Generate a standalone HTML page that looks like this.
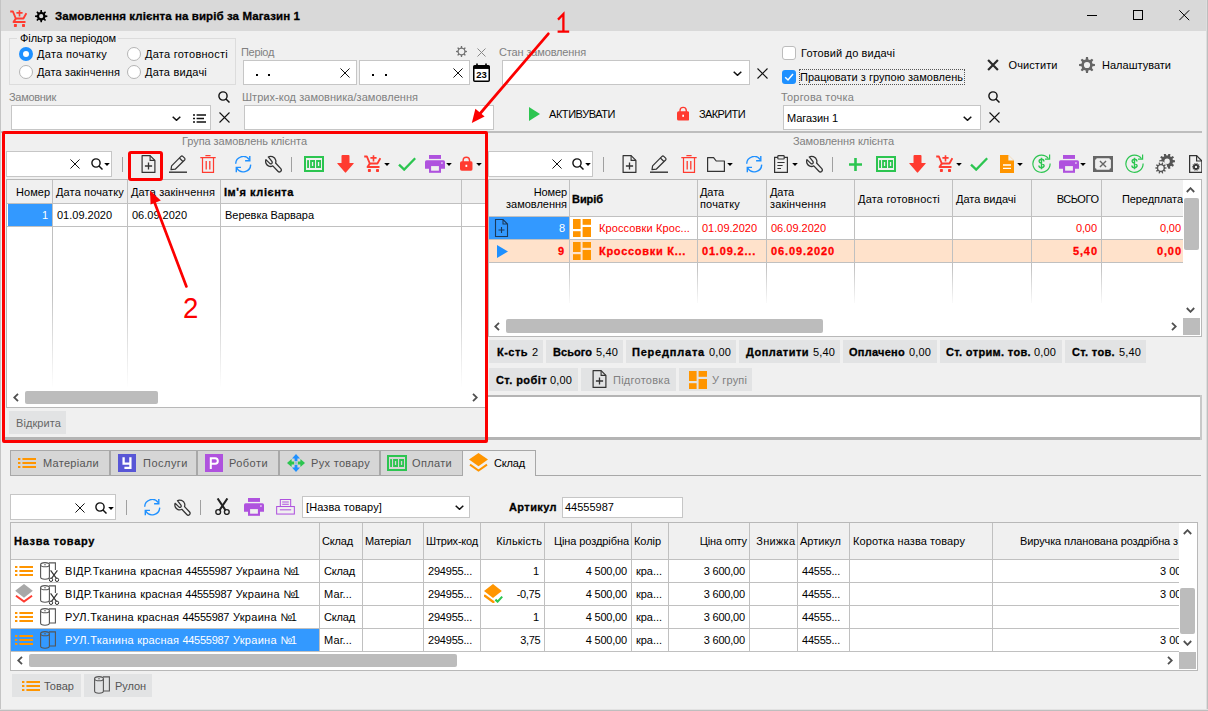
<!DOCTYPE html>
<html><head><meta charset="utf-8"><title>UI</title><style>
html,body{margin:0;padding:0;}
body{width:1208px;height:711px;overflow:hidden;background:#f0f0f0;position:relative;font-family:"Liberation Sans",sans-serif;font-size:11px;}
.a{position:absolute;display:block;}
.t{white-space:nowrap;overflow:visible;}
</style></head><body>
<svg width="0" height="0" style="position:absolute"><defs><symbol id="newdoc" viewBox="0 0 14 18"><path d="M0.6 0.6H8.6L13.4 5.4V17.4H0.6Z" fill="none" stroke="#333" stroke-width="1.2" stroke-linejoin="round"/><path d="M8.6 0.6V5.4H13.4" fill="none" stroke="#333" stroke-width="1.1"/><path d="M7 7.6V14.4M3.4 11H10.6" stroke="#333" stroke-width="1.3" fill="none"/></symbol><symbol id="pencil" viewBox="0 0 18 18"><path d="M2 14.6L2.6 10.8L12 1.4Q12.9 0.6 13.8 1.4L15.6 3.2Q16.4 4.1 15.6 5L6.2 14.2Z" fill="none" stroke="#333" stroke-width="1.2" stroke-linejoin="round"/><path d="M10.4 3L13.9 6.5" stroke="#333" stroke-width="1.2"/><path d="M0 17.2H18" stroke="#333" stroke-width="1.4"/></symbol><symbol id="trash" viewBox="0 0 16 18"><path d="M0.3 2.6H15.7M5.4 0.6H10.6" stroke="#ff3b30" stroke-width="1.2" fill="none"/><path d="M2.5 2.6V17.3H13.5V2.6" fill="none" stroke="#ff3b30" stroke-width="1.2"/><path d="M6.2 6V14.4M9.8 6V14.4" stroke="#ff3b30" stroke-width="1.3"/></symbol><symbol id="refresh" viewBox="0 0 17 17"><path d="M0.7 7.8A7.5 7.5 0 0 1 14.3 3.6" fill="none" stroke="#1e90ff" stroke-width="1.4"/><path d="M14.8 0V4.7H10.1" fill="none" stroke="#1e90ff" stroke-width="1.4"/><path d="M15.7 8.6A7.5 7.5 0 0 1 1.8 12.2" fill="none" stroke="#1e90ff" stroke-width="1.4"/><path d="M1.3 16.2V11.4H6" fill="none" stroke="#1e90ff" stroke-width="1.4"/></symbol><symbol id="wrench" viewBox="0 0 17 17.5"><path d="M3.3 1.7C5.5 0.2 9.8 1.5 10.7 4.8C11 6 10.9 7 10.6 7.8L15.8 13.4Q17 14.9 15.6 16.2Q14.2 17.4 12.9 16L7.8 10.6C6.5 11.3 5 11.4 3.8 10.9C1.5 10 0 7.2 0.9 4.4L5 8.4Q6 9 6.8 8.2Q7.6 7.2 6.9 6.2Z" fill="none" stroke="#333" stroke-width="1.3" stroke-linejoin="round"/></symbol><symbol id="money" viewBox="0 0 20 16"><rect x="1" y="1" width="18" height="14" fill="none" stroke="#2cc550" stroke-width="2"/><rect x="3.1" y="4.1" width="1.9" height="7.9" rx="0.5" fill="#2cc550"/><path d="M6.1 4.1H11V12H6.1Z M7.9 6.1V10H9.2V6.1Z M12.1 4.1H17V12H12.1Z M13.9 6.1V10H15.2V6.1Z" fill="#2cc550" fill-rule="evenodd"/></symbol><symbol id="down" viewBox="0 0 17 18"><path d="M4.5 1Q4.5 0 5.5 0H11.5Q12.5 0 12.5 1V8H16.3Q17.2 8 16.5 8.8L9.1 17.3Q8.5 18 7.9 17.3L0.5 8.8Q-0.2 8 0.7 8H4.5Z" fill="#ff3b30"/></symbol><symbol id="cart" viewBox="0 0 17 18"><path d="M0.2 1.5H2.9L5.8 8.5H13.4L16.4 3.2" fill="none" stroke="#ff3b30" stroke-width="1.9" stroke-linejoin="round"/><path d="M5.8 8.6L3.5 12H15.5" fill="none" stroke="#ff3b30" stroke-width="1.9" stroke-linejoin="round"/><rect x="3.9" y="14" width="3" height="3" rx="0.7" fill="#ff3b30"/><rect x="12" y="14" width="3" height="3" rx="0.7" fill="#ff3b30"/><path d="M9.5 0.2V6.4M6.4 2.9H12.6" stroke="#ff3b30" stroke-width="1.6"/></symbol><symbol id="check" viewBox="0 0 18 14"><path d="M1 7.6L6.2 12.6L17.2 1.2" fill="none" stroke="#2cc550" stroke-width="2.3"/></symbol><symbol id="printer" viewBox="0 0 20 18"><rect x="4" y="0" width="12" height="3.9" fill="#af52de"/><path d="M1.6 5.2H18.4Q20 5.2 20 6.8V13.8H0V6.8Q0 5.2 1.6 5.2Z" fill="#af52de"/><rect x="4" y="10" width="12" height="7.8" fill="#af52de"/><rect x="6.1" y="11.1" width="7.8" height="4.6" fill="#f0f0f0"/><rect x="16" y="7.1" width="1.8" height="1.8" rx="0.4" fill="#dbb6ef"/></symbol><symbol id="printer2" viewBox="0 0 20 17"><path d="M4.5 8V0.6H15.5V8" fill="none" stroke="#af52de" stroke-width="1.1"/><rect x="0.6" y="8" width="18.8" height="8" fill="none" stroke="#af52de" stroke-width="1.1"/><path d="M6.5 3.2H13.5M6.5 5.6H13.5" stroke="#af52de" stroke-width="1.1"/><path d="M4 11.5H16" stroke="#af52de" stroke-width="1.1"/></symbol><symbol id="lock" viewBox="0 0 13 15"><path d="M3.2 6V4.3A3.3 3.3 0 0 1 9.8 4.3V6" fill="none" stroke="#ff3b30" stroke-width="1.5"/><rect x="0" y="5.2" width="13" height="9.8" rx="1.8" fill="#ff3b30"/><rect x="5.6" y="8.8" width="1.8" height="2.2" fill="#fff"/></symbol><symbol id="dd" viewBox="0 0 6 3.2"><path d="M0 0H6L3 3.2Z" fill="#000"/></symbol><symbol id="folder" viewBox="0 0 18 15"><path d="M0.6 14.4V0.6H6.6L9.2 4H17.4V14.4Z" fill="none" stroke="#333" stroke-width="1.2" stroke-linejoin="round"/></symbol><symbol id="clip" viewBox="0 0 14 18"><path d="M3.8 2.4H0.6V17.4H13.4V2.4H10.2" fill="none" stroke="#333" stroke-width="1.2"/><rect x="3.8" y="0.6" width="6.4" height="3.4" rx="0.8" fill="none" stroke="#333" stroke-width="1.2"/><path d="M3.4 7.5H10.6M3.4 10.5H8.6M3.4 13.5H7" stroke="#333" stroke-width="1.2"/></symbol><symbol id="plus" viewBox="0 0 13 13"><path d="M6.5 0V13M0 6.5H13" stroke="#2cc550" stroke-width="2.6"/></symbol><symbol id="odoc" viewBox="0 0 14 18"><path d="M0 0H8.4L14 5.6V18H0Z" fill="#ff9500"/><path d="M3 10H11M3 13.4H11" stroke="#fff" stroke-width="1.3"/><path d="M8.4 0V5.6H14Z" fill="#f0f0f0"/></symbol><symbol id="dollar" viewBox="0 0 19 19"><path d="M16.4 4.6A8.6 8.6 0 1 0 18.1 9.4" fill="none" stroke="#2cc550" stroke-width="1.2"/><path d="M17.6 0.6V5.2H13" fill="none" stroke="#2cc550" stroke-width="1.2"/><path d="M11.9 7.4C11.9 5.9 10.8 5.3 9.5 5.3C8 5.3 7.1 6.1 7.1 7.2C7.1 8.5 8.2 8.9 9.5 9.3C10.9 9.7 12.1 10.2 12.1 11.6C12.1 12.9 11 13.7 9.5 13.7C8 13.7 6.9 12.9 6.9 11.5M9.5 3.8V15.2" fill="none" stroke="#2cc550" stroke-width="1.4"/></symbol><symbol id="xbox" viewBox="0 0 19 15"><path d="M0 0H19V15H0Z M2 3.4Q3.4 3.4 3.4 2H15.6Q15.6 3.4 17 3.4V11.6Q15.6 11.6 15.6 13H3.4Q3.4 11.6 2 11.6Z" fill="#666" fill-rule="evenodd"/><path d="M6.6 4.6L12.4 10.4M12.4 4.6L6.6 10.4" stroke="#666" stroke-width="1.3"/></symbol><symbol id="gearblk" viewBox="0 0 13 13"><path d="M12.36 5.47L12.36 6.93L10.40 7.14L9.83 8.50L11.07 10.04L10.04 11.07L8.50 9.83L7.14 10.40L6.93 12.36L5.47 12.36L5.26 10.40L3.90 9.83L2.36 11.07L1.33 10.04L2.57 8.50L2.00 7.14L0.04 6.93L0.04 5.47L2.00 5.26L2.57 3.90L1.33 2.36L2.36 1.33L3.90 2.57L5.26 2.00L5.47 0.04L6.93 0.04L7.14 2.00L8.50 2.57L10.04 1.33L11.07 2.36L9.83 3.90L10.40 5.26Z M4.10 6.20a2.1 2.1 0 1 0 4.2 0a2.1 2.1 0 1 0 -4.2 0Z" fill="#000" fill-rule="evenodd"/></symbol><symbol id="geargray" viewBox="0 0 17 17"><path d="M16.93 7.43L16.93 9.57L14.43 9.92L13.70 11.69L15.22 13.71L13.71 15.22L11.69 13.70L9.92 14.43L9.57 16.93L7.43 16.93L7.08 14.43L5.31 13.70L3.29 15.22L1.78 13.71L3.30 11.69L2.57 9.92L0.07 9.57L0.07 7.43L2.57 7.08L3.30 5.31L1.78 3.29L3.29 1.78L5.31 3.30L7.08 2.57L7.43 0.07L9.57 0.07L9.92 2.57L11.69 3.30L13.71 1.78L15.22 3.29L13.70 5.31L14.43 7.08Z M5.20 8.50a3.3 3.3 0 1 0 6.6 0a3.3 3.3 0 1 0 -6.6 0Z" fill="#666" fill-rule="evenodd"/></symbol><symbol id="gearout" viewBox="0 0 11 11"><path d="M10.97 4.94L10.97 6.06L9.29 6.41L8.83 7.54L9.77 8.97L8.97 9.77L7.54 8.83L6.41 9.29L6.06 10.97L4.94 10.97L4.59 9.29L3.46 8.83L2.03 9.77L1.23 8.97L2.17 7.54L1.71 6.41L0.03 6.06L0.03 4.94L1.71 4.59L2.17 3.46L1.23 2.03L2.03 1.23L3.46 2.17L4.59 1.71L4.94 0.03L6.06 0.03L6.41 1.71L7.54 2.17L8.97 1.23L9.77 2.03L8.83 3.46L9.29 4.59Z M2.70 5.50a2.8 2.8 0 1 0 5.6 0a2.8 2.8 0 1 0 -5.6 0Z" fill="#707070" fill-rule="evenodd"/></symbol><symbol id="gears" viewBox="0 0 21 20.5"><path d="M19.94 6.31L19.94 8.29L17.88 8.48L17.47 9.74L19.02 11.11L17.86 12.71L16.08 11.65L15.01 12.43L15.46 14.45L13.58 15.06L12.77 13.16L11.43 13.16L10.62 15.06L8.74 14.45L9.19 12.43L8.12 11.65L6.34 12.71L5.18 11.11L6.73 9.74L6.32 8.48L4.26 8.29L4.26 6.31L6.32 6.12L6.73 4.86L5.18 3.49L6.34 1.89L8.12 2.95L9.19 2.17L8.74 0.15L10.62 -0.46L11.43 1.44L12.77 1.44L13.58 -0.46L15.46 0.15L15.01 2.17L16.08 2.95L17.86 1.89L19.02 3.49L17.47 4.86L17.88 6.12Z M9.40 7.30a2.7 2.7 0 1 0 5.4 0a2.7 2.7 0 1 0 -5.4 0Z" fill="#555" fill-rule="evenodd"/><circle cx="5.9" cy="14" r="6.7" fill="#f0f0f0"/><path d="M11.57 13.39L11.57 14.61L9.93 14.77L9.61 15.75L10.84 16.84L10.13 17.82L8.71 16.99L7.88 17.59L8.23 19.20L7.07 19.58L6.41 18.07L5.39 18.07L4.73 19.58L3.57 19.20L3.92 17.59L3.09 16.99L1.67 17.82L0.96 16.84L2.19 15.75L1.87 14.77L0.23 14.61L0.23 13.39L1.87 13.23L2.19 12.25L0.96 11.16L1.67 10.18L3.09 11.01L3.92 10.41L3.57 8.80L4.73 8.42L5.39 9.93L6.41 9.93L7.07 8.42L8.23 8.80L7.88 10.41L8.71 11.01L10.13 10.18L10.84 11.16L9.61 12.25L9.93 13.23Z M3.20 14.00a2.7 2.7 0 1 0 5.4 0a2.7 2.7 0 1 0 -5.4 0Z" fill="#555" fill-rule="evenodd"/></symbol><symbol id="docgear" viewBox="0 0 14 18"><path d="M0.6 0.6H7.6L12.9 6V17.4H0.6Z" fill="none" stroke="#333" stroke-width="1.3" stroke-linejoin="round"/><path d="M7.6 0.6V6H12.9" fill="none" stroke="#333" stroke-width="1.2"/><path d="M10.97 11.45L10.97 12.35L9.85 12.44L9.62 13.13L10.48 13.87L9.95 14.60L8.99 14.01L8.40 14.44L8.66 15.54L7.80 15.82L7.36 14.78L6.64 14.78L6.20 15.82L5.34 15.54L5.60 14.44L5.01 14.01L4.05 14.60L3.52 13.87L4.38 13.13L4.15 12.44L3.03 12.35L3.03 11.45L4.15 11.36L4.38 10.67L3.52 9.93L4.05 9.20L5.01 9.79L5.60 9.36L5.34 8.26L6.20 7.98L6.64 9.02L7.36 9.02L7.80 7.98L8.66 8.26L8.40 9.36L8.99 9.79L9.95 9.20L10.48 9.93L9.62 10.67L9.85 11.36Z M5.80 11.90a1.2 1.2 0 1 0 2.4 0a1.2 1.2 0 1 0 -2.4 0Z" fill="#333" fill-rule="evenodd"/></symbol><symbol id="search" viewBox="0 0 12 12"><circle cx="5" cy="5" r="4.1" fill="none" stroke="#111" stroke-width="1.4"/><path d="M8 8L11.5 11.5" stroke="#111" stroke-width="1.5"/></symbol><symbol id="x" viewBox="0 0 11 11"><path d="M0.5 0.5L10.5 10.5M10.5 0.5L0.5 10.5" stroke="#111" stroke-width="1.1"/></symbol><symbol id="xgray" viewBox="0 0 9 9"><path d="M0.5 0.5L8.5 8.5M8.5 0.5L0.5 8.5" stroke="#888" stroke-width="1"/></symbol><symbol id="xbold" viewBox="0 0 11 11"><path d="M1 1L10 10M10 1L1 10" stroke="#2a2a2a" stroke-width="2"/></symbol><symbol id="chev" viewBox="0 0 9 5"><path d="M0.7 0.7L4.5 4.3L8.3 0.7" fill="none" stroke="#111" stroke-width="1.5"/></symbol><symbol id="list" viewBox="0 0 13 9"><path d="M0 1H2M0 4.5H2M0 8H2" stroke="#111" stroke-width="1.6"/><path d="M3.6 1H13M3.6 4.5H11M3.6 8H13" stroke="#111" stroke-width="1.6"/></symbol><symbol id="olist" viewBox="0 0 18 10"><path d="M0 1H2.4M0 5H2.4M0 9H2.4" stroke="#ff9500" stroke-width="1.8"/><path d="M4.4 1H18M4.4 5H18M4.4 9H18" stroke="#ff9500" stroke-width="1.8"/></symbol><symbol id="ogrid" viewBox="0 0 18 18"><rect x="0" y="0" width="7.6" height="10" fill="#ff9500"/><rect x="9.6" y="0" width="8.4" height="5.8" fill="#ff9500"/><rect x="0" y="12.2" width="7.6" height="5.8" fill="#ff9500"/><rect x="9.6" y="8" width="8.4" height="10" fill="#ff9500"/></symbol><symbol id="play" viewBox="0 0 11 14"><path d="M0 0L11 7L0 14Z" fill="#2cc550"/></symbol><symbol id="playblue" viewBox="0 0 11 13"><path d="M0 0L11 6.5L0 13Z" fill="#1e90ff"/></symbol><symbol id="cal" viewBox="0 0 17 19"><rect x="0.75" y="2.75" width="15.5" height="15.5" rx="1" fill="#fff" stroke="#000" stroke-width="1.5"/><rect x="0.75" y="2.75" width="15.5" height="3.2" fill="#000"/><path d="M4 0.5V3M13 0.5V3" stroke="#000" stroke-width="1.6"/><text x="8.6" y="15.2" font-family="Liberation Sans" font-size="9.5" font-weight="bold" text-anchor="middle" fill="#000">23</text></symbol><symbol id="scis" viewBox="0 0 15 17"><path d="M2.6 0.4L10.6 12.4M12.4 0.4L4.4 12.4" stroke="#222" stroke-width="2"/><circle cx="3.2" cy="14" r="2.4" fill="none" stroke="#222" stroke-width="1.4"/><circle cx="11.8" cy="14" r="2.4" fill="none" stroke="#222" stroke-width="1.4"/></symbol><symbol id="move" viewBox="0 0 18 18"><path d="M9 0L13 4.6H5Z" fill="#1e90ff"/><path d="M9 18L13 13.4H5Z" fill="#1e90ff"/><path d="M0 9L4.6 5V13Z" fill="#2cc550"/><path d="M18 9L13.4 5V13Z" fill="#2cc550"/><path d="M9 4V7.2M9 10.8V14" stroke="#1e90ff" stroke-width="2.8"/><path d="M4 9H7.2M10.8 9H14" stroke="#2cc550" stroke-width="2.8"/><rect x="8.1" y="8.1" width="1.8" height="1.8" fill="#9db8d8"/></symbol><symbol id="layers" viewBox="0 0 19 19"><path d="M9.5 0L19 6.6L9.5 13.2L0 6.6Z" fill="#ff9500"/><path d="M1 11.6L9.5 17.6L18 11.6" fill="none" stroke="#ff9500" stroke-width="1.9"/></symbol><symbol id="layersgray" viewBox="0 0 18 19.4"><path d="M9 0L18 7L9 14L0 7Z" fill="#a8a8a8"/><path d="M0.8 12L9 18L17.2 12" fill="none" stroke="#ff3b30" stroke-width="2"/></symbol><symbol id="layerschk" viewBox="0 0 19 19"><path d="M9 0L17.8 7L9 14L0 7Z" fill="#ff9500"/><path d="M0.8 11.8L9.4 18" fill="none" stroke="#ff9500" stroke-width="2.4" stroke-linecap="round"/><path d="M11.4 15.6L13.6 17.6L18.2 12.6" fill="none" stroke="#2cc550" stroke-width="2.1"/></symbol><symbol id="roll" viewBox="0 0 17 18"><ellipse cx="5" cy="2.7" rx="4.4" ry="2.1" fill="none" stroke="#555" stroke-width="1.1"/><path d="M0.6 2.7V15Q0.6 17.2 5 17.2Q9.4 17.2 9.4 15V2.7" fill="none" stroke="#555" stroke-width="1.1"/><path d="M9 0.9H15.4V15H9.4" fill="none" stroke="#555" stroke-width="1.1"/><ellipse cx="5" cy="2.7" rx="1" ry="0.5" fill="#555"/></symbol><symbol id="rollw" viewBox="0 0 13 17"><ellipse cx="8.5" cy="2.6" rx="4" ry="2" fill="none" stroke="#cfe4ff" stroke-width="1.1"/><path d="M4.5 2.6V16.4H12.5V2.6" fill="none" stroke="#cfe4ff" stroke-width="1.1"/><path d="M4.5 1.2H2.2Q0.6 1.2 0.6 2.8V14.4H4.5" fill="none" stroke="#cfe4ff" stroke-width="1.1"/></symbol><symbol id="rollcut" viewBox="0 0 20 20"><ellipse cx="5" cy="2.7" rx="4.4" ry="2.1" fill="none" stroke="#555" stroke-width="1.1"/><path d="M0.6 2.7V15Q0.6 17.2 5 17.2Q9.4 17.2 9.4 15V2.7" fill="none" stroke="#555" stroke-width="1.1"/><path d="M9 0.9H15.4V8" fill="none" stroke="#555" stroke-width="1.1"/><ellipse cx="5" cy="2.7" rx="1" ry="0.5" fill="#555"/><path d="M10.6 8.4L16.4 16.4M17.4 8.4L11.6 16.4" stroke="#333" stroke-width="1.2"/><circle cx="11" cy="17.8" r="1.7" fill="none" stroke="#333" stroke-width="1"/><circle cx="17" cy="17.8" r="1.7" fill="none" stroke="#333" stroke-width="1"/></symbol><symbol id="uicon" viewBox="0 0 18 18"><rect width="18" height="18" fill="#5856d6"/><path d="M5.6 3.2V9.6H12.4M12.4 3.2V13.8H6.4" fill="none" stroke="#fff" stroke-width="2.3"/></symbol><symbol id="picon" viewBox="0 0 18 18"><rect width="18" height="18" fill="#af52de"/><path d="M5.8 15V4.2H10.2Q12.8 4.2 12.8 7Q12.8 9.8 10.2 9.8H5.8" fill="none" stroke="#fff" stroke-width="2"/></symbol><symbol id="sl" viewBox="0 0 6 9"><path d="M5 0.8L1.2 4.5L5 8.2" fill="none" stroke="#505050" stroke-width="1.8"/></symbol><symbol id="sr" viewBox="0 0 6 9"><path d="M1 0.8L4.8 4.5L1 8.2" fill="none" stroke="#505050" stroke-width="1.8"/></symbol><symbol id="su" viewBox="0 0 9 6"><path d="M0.8 5L4.5 1.2L8.2 5" fill="none" stroke="#505050" stroke-width="1.8"/></symbol><symbol id="sd" viewBox="0 0 9 6"><path d="M0.8 1L4.5 4.8L8.2 1" fill="none" stroke="#505050" stroke-width="1.8"/></symbol></defs></svg>
<div class="a " style="left:0px;top:0px;width:1208px;height:31px;background:#d9d9d9;"></div>
<div class="a " style="left:0px;top:0px;width:1px;height:711px;background:#c4c4c4;"></div>
<div class="a " style="left:1206px;top:0px;width:1px;height:711px;background:#dedede;"></div>
<div class="a " style="left:1207px;top:0px;width:1px;height:711px;background:#bebebe;"></div>
<div class="a " style="left:0px;top:709px;width:1208px;height:1px;background:#e2e2e2;"></div>
<div class="a " style="left:0px;top:710px;width:1208px;height:1px;background:#bebebe;"></div>
<svg class="a" style="left:10px;top:10px" width="17" height="18"><use href="#cart"/></svg>
<svg class="a" style="left:35px;top:10px" width="13" height="13"><use href="#gearblk"/></svg>
<div class="a t" style="top:8px;height:16px;line-height:16px;font-size:11.5px;color:#000;font-weight:bold;-webkit-text-stroke:0.3px;letter-spacing:0.093px;left:55px;">Замовлення клієнта на виріб за Магазин 1</div>
<div class="a " style="left:1087px;top:15px;width:10px;height:1px;background:#000;"></div>
<div class="a " style="left:1133px;top:10px;width:10px;height:10px;border:1px solid #000;box-sizing:border-box;"></div>
<svg class="a" style="left:1179px;top:10px;" width="11" height="11" viewBox="0 0 11 11"><path d="M0.3 0.3L10.2 10.2M10.2 0.3L0.3 10.2" stroke="#000" stroke-width="1"/></svg>
<div class="a " style="left:9px;top:38px;width:227px;height:47px;border:1px solid #dcdcdc;box-sizing:border-box;"></div>
<div class="a " style="left:17px;top:33px;width:101px;height:12px;background:#f0f0f0;"></div>
<div class="a t" style="top:31px;height:14px;line-height:14px;font-size:11px;color:#000;letter-spacing:-0.063px;left:20px;">Фільтр за періодом</div>
<div class="a" style="left:19px;top:47px;width:14px;height:14px;border-radius:50%;box-sizing:border-box;border:4.7px solid #1e90ff;background:#fff"></div>
<div class="a" style="left:126.5px;top:47px;width:14px;height:14px;border-radius:50%;box-sizing:border-box;border:1px solid #b4b4b4;background:#fff"></div>
<div class="a" style="left:19px;top:65px;width:14px;height:14px;border-radius:50%;box-sizing:border-box;border:1px solid #b4b4b4;background:#fff"></div>
<div class="a" style="left:126.5px;top:65px;width:14px;height:14px;border-radius:50%;box-sizing:border-box;border:1px solid #b4b4b4;background:#fff"></div>
<div class="a t" style="top:47px;height:14px;line-height:14px;font-size:11px;color:#000;letter-spacing:0.306px;left:37px;">Дата початку</div>
<div class="a t" style="top:47px;height:14px;line-height:14px;font-size:11px;color:#000;letter-spacing:0.259px;left:145px;">Дата готовності</div>
<div class="a t" style="top:65px;height:14px;line-height:14px;font-size:11px;color:#000;letter-spacing:0.076px;left:37px;">Дата закінчення</div>
<div class="a t" style="top:65px;height:14px;line-height:14px;font-size:11px;color:#000;letter-spacing:0.193px;left:145px;">Дата видачі</div>
<div class="a t" style="top:45px;height:14px;line-height:14px;font-size:11px;color:#808080;letter-spacing:-0.313px;left:241px;">Період</div>
<svg class="a" style="left:456px;top:46px" width="11" height="11"><use href="#gearout"/></svg>
<svg class="a" style="left:477px;top:48px" width="9" height="9"><use href="#xgray"/></svg>
<div class="a " style="left:243px;top:60px;width:114px;height:25px;background:#fff;border:1px solid #c6c6c6;box-sizing:border-box;"></div>
<div class="a " style="left:359px;top:60px;width:111px;height:25px;background:#fff;border:1px solid #c6c6c6;box-sizing:border-box;"></div>
<div class="a " style="left:256px;top:74px;width:2px;height:2px;background:#000;"></div>
<div class="a " style="left:268px;top:74px;width:2px;height:2px;background:#000;"></div>
<div class="a " style="left:372px;top:74px;width:2px;height:2px;background:#000;"></div>
<div class="a " style="left:384.5px;top:74px;width:2px;height:2px;background:#000;"></div>
<svg class="a" style="left:340px;top:68px" width="10" height="10"><use href="#x"/></svg>
<svg class="a" style="left:453px;top:68px" width="10" height="10"><use href="#x"/></svg>
<svg class="a" style="left:473px;top:63px" width="17" height="19"><use href="#cal"/></svg>
<div class="a t" style="top:45px;height:14px;line-height:14px;font-size:11px;color:#808080;letter-spacing:-0.145px;left:499px;">Стан замовлення</div>
<div class="a " style="left:502px;top:60px;width:248px;height:25px;background:#fff;border:1px solid #c6c6c6;box-sizing:border-box;"></div>
<svg class="a" style="left:733px;top:71px" width="9" height="5"><use href="#chev"/></svg>
<svg class="a" style="left:757px;top:68px" width="11" height="11"><use href="#x"/></svg>
<div class="a" style="left:782px;top:46px;width:14px;height:14px;box-sizing:border-box;border:1px solid #bcbcbc;border-radius:3px;background:#fff"></div>
<div class="a t" style="top:46px;height:14px;line-height:14px;font-size:11px;color:#000;letter-spacing:0.155px;left:801px;">Готовий до видачі</div>
<div class="a" style="left:782px;top:70px;width:14px;height:14px;border-radius:3px;background:#1e90ff"></div>
<svg class="a" style="left:782px;top:70px;" width="14" height="14" viewBox="0 0 14 14"><path d="M3.2 7.2L6 10L11 4" fill="none" stroke="#fff" stroke-width="1.5"/></svg>
<div class="a" style="left:799px;top:69px;width:166px;height:16px;box-sizing:border-box;border:1px dotted #555"></div>
<div class="a t" style="top:70px;height:14px;line-height:14px;font-size:11px;color:#000;letter-spacing:0.025px;left:800px;">Працювати з групою замовлень</div>
<svg class="a" style="left:987px;top:59px" width="12" height="12"><use href="#xbold"/></svg>
<div class="a t" style="top:58px;height:14px;line-height:14px;font-size:11px;color:#000;letter-spacing:0.088px;left:1008.5px;">Очистити</div>
<svg class="a" style="left:1079px;top:57px" width="16" height="16"><use href="#geargray"/></svg>
<div class="a t" style="top:58px;height:14px;line-height:14px;font-size:11px;color:#000;letter-spacing:0.012px;left:1102px;">Налаштувати</div>
<div class="a t" style="top:90px;height:14px;line-height:14px;font-size:11px;color:#808080;letter-spacing:-0.290px;left:9px;">Замовник</div>
<div class="a " style="left:11px;top:105px;width:200px;height:25px;background:#fff;border:1px solid #c6c6c6;box-sizing:border-box;"></div>
<svg class="a" style="left:172px;top:116px" width="9" height="5"><use href="#chev"/></svg>
<svg class="a" style="left:193px;top:114px" width="13" height="9"><use href="#list"/></svg>
<svg class="a" style="left:218px;top:91px" width="12" height="12"><use href="#search"/></svg>
<svg class="a" style="left:219px;top:112px" width="11" height="11"><use href="#x"/></svg>
<div class="a t" style="top:90px;height:14px;line-height:14px;font-size:11px;color:#808080;letter-spacing:0.032px;left:242px;">Штрих-код замовника/замовлення</div>
<div class="a " style="left:244px;top:105px;width:250px;height:25px;background:#fff;border:1px solid #c6c6c6;box-sizing:border-box;"></div>
<svg class="a" style="left:529px;top:107px" width="11" height="14"><use href="#play"/></svg>
<div class="a t" style="top:107px;height:14px;line-height:14px;font-size:11px;color:#000;letter-spacing:-0.440px;left:549px;">АКТИВУВАТИ</div>
<svg class="a" style="left:677px;top:106px" width="12.3" height="15"><use href="#lock"/></svg>
<div class="a t" style="top:107px;height:14px;line-height:14px;font-size:11px;color:#000;letter-spacing:-0.608px;left:699px;">ЗАКРИТИ</div>
<div class="a t" style="top:90px;height:14px;line-height:14px;font-size:11px;color:#808080;letter-spacing:0.187px;left:781px;">Торгова точка</div>
<div class="a " style="left:783px;top:105px;width:198px;height:25px;background:#fff;border:1px solid #c6c6c6;box-sizing:border-box;"></div>
<div class="a t" style="top:111px;height:14px;line-height:14px;font-size:11px;color:#000;letter-spacing:-0.067px;left:787px;">Магазин 1</div>
<svg class="a" style="left:963px;top:116px" width="9" height="5"><use href="#chev"/></svg>
<svg class="a" style="left:988px;top:91px" width="12" height="12"><use href="#search"/></svg>
<svg class="a" style="left:989px;top:112px" width="11" height="11"><use href="#x"/></svg>
<div class="a " style="left:1px;top:131px;width:1201px;height:2px;background:#bdbdbd;"></div>
<div class="a t" style="top:134px;height:14px;line-height:14px;font-size:11px;color:#808080;letter-spacing:-0.057px;left:182px;">Група замовлень клієнта</div>
<div class="a " style="left:6px;top:151px;width:106px;height:26px;background:#fff;border:1px solid #c6c6c6;box-sizing:border-box;"></div>
<svg class="a" style="left:70px;top:159px" width="10" height="10"><use href="#x"/></svg>
<svg class="a" style="left:91px;top:158px" width="12" height="12"><use href="#search"/></svg>
<svg class="a" style="left:104px;top:163px" width="6" height="3"><use href="#dd"/></svg>
<div class="a " style="left:122px;top:157px;width:1px;height:15px;background:#a0a0a0;"></div>
<svg class="a" style="left:141px;top:155px" width="15" height="18"><use href="#newdoc"/></svg>
<svg class="a" style="left:169px;top:155px" width="18" height="18"><use href="#pencil"/></svg>
<svg class="a" style="left:200px;top:155px" width="16" height="18"><use href="#trash"/></svg>
<svg class="a" style="left:235px;top:156px" width="17" height="17"><use href="#refresh"/></svg>
<svg class="a" style="left:265px;top:155px" width="17" height="18"><use href="#wrench"/></svg>
<div class="a " style="left:291px;top:157px;width:1px;height:15px;background:#a0a0a0;"></div>
<svg class="a" style="left:304px;top:156px" width="20" height="16"><use href="#money"/></svg>
<svg class="a" style="left:336.5px;top:155px" width="17" height="18"><use href="#down"/></svg>
<svg class="a" style="left:364px;top:155px" width="17" height="18"><use href="#cart"/></svg>
<svg class="a" style="left:384px;top:163px" width="6" height="3"><use href="#dd"/></svg>
<svg class="a" style="left:398px;top:157px" width="18" height="14"><use href="#check"/></svg>
<svg class="a" style="left:425px;top:155px" width="20" height="18"><use href="#printer"/></svg>
<svg class="a" style="left:446px;top:163px" width="6" height="3"><use href="#dd"/></svg>
<svg class="a" style="left:460px;top:156px" width="12.7" height="15"><use href="#lock"/></svg>
<svg class="a" style="left:476px;top:163px" width="6" height="3"><use href="#dd"/></svg>
<div class="a " style="left:6px;top:179px;width:480px;height:229px;background:#fff;border:1px solid #b8b8b8;box-sizing:border-box;"></div>
<div class="a " style="left:7px;top:180px;width:478px;height:23px;background:#f0f0f0;"></div>
<div class="a " style="left:7px;top:203px;width:478px;height:1px;background:#c0c0c0;"></div>
<div class="a " style="left:7px;top:226px;width:478px;height:1px;background:#c0c0c0;"></div>
<div class="a " style="left:52px;top:180px;width:1px;height:208px;background:#c0c0c0;"></div>
<div class="a " style="left:127px;top:180px;width:1px;height:208px;background:#c0c0c0;"></div>
<div class="a " style="left:220px;top:180px;width:1px;height:208px;background:#c0c0c0;"></div>
<div class="a " style="left:461px;top:180px;width:1px;height:208px;background:#c0c0c0;"></div>
<div class="a t" style="top:185px;height:14px;line-height:14px;font-size:11px;color:#000;letter-spacing:0.028px;right:1157.97px;text-align:right;">Номер</div>
<div class="a t" style="top:185px;height:14px;line-height:14px;font-size:11px;color:#000;letter-spacing:0.139px;left:56px;">Дата початку</div>
<div class="a t" style="top:185px;height:14px;line-height:14px;font-size:11px;color:#000;letter-spacing:0.143px;left:131px;">Дата закінчення</div>
<div class="a t" style="top:185px;height:14px;line-height:14px;font-size:11px;color:#000;font-weight:bold;-webkit-text-stroke:0.3px;letter-spacing:0.567px;left:224px;">Ім&#x27;я клієнта</div>
<div class="a " style="left:8px;top:204px;width:44px;height:22px;background:#3399ff;"></div>
<div class="a t" style="top:208px;height:14px;line-height:14px;font-size:11px;color:#fff;right:1160.00px;text-align:right;">1</div>
<div class="a t" style="top:208px;height:14px;line-height:14px;font-size:11px;color:#000;letter-spacing:-0.005px;left:57px;">01.09.2020</div>
<div class="a t" style="top:208px;height:14px;line-height:14px;font-size:11px;color:#000;letter-spacing:-0.005px;left:132px;">06.09.2020</div>
<div class="a t" style="top:208px;height:14px;line-height:14px;font-size:11px;color:#000;letter-spacing:-0.027px;left:225px;">Веревка Варвара</div>
<div class="a" style="left:8px;top:290px;width:477px;height:98px;background:linear-gradient(rgba(255,255,255,0),#fff)"></div>
<svg class="a" style="left:13px;top:393px" width="6" height="9"><use href="#sl"/></svg>
<div class="a " style="left:25px;top:391px;width:133px;height:13px;background:#bcbcbc;border-radius:2px;"></div>
<svg class="a" style="left:472px;top:393px" width="6" height="9"><use href="#sr"/></svg>
<div class="a " style="left:9px;top:411px;width:57px;height:23px;background:#e2e3e4;"></div>
<div class="a t" style="top:416px;height:14px;line-height:14px;font-size:11px;color:#666;letter-spacing:0.087px;left:16px;">Відкрита</div>
<div class="a t" style="top:134px;height:14px;line-height:14px;font-size:11px;color:#808080;letter-spacing:-0.069px;left:793px;">Замовлення клієнта</div>
<div class="a " style="left:488px;top:151px;width:105px;height:26px;background:#fff;border:1px solid #c6c6c6;box-sizing:border-box;"></div>
<svg class="a" style="left:552px;top:159px" width="10" height="10"><use href="#x"/></svg>
<svg class="a" style="left:572px;top:158px" width="12" height="12"><use href="#search"/></svg>
<svg class="a" style="left:585px;top:163px" width="6" height="3"><use href="#dd"/></svg>
<div class="a " style="left:603px;top:157px;width:1px;height:15px;background:#a0a0a0;"></div>
<svg class="a" style="left:622px;top:155px" width="15" height="18"><use href="#newdoc"/></svg>
<svg class="a" style="left:650px;top:155px" width="18" height="18"><use href="#pencil"/></svg>
<svg class="a" style="left:681px;top:155px" width="16" height="18"><use href="#trash"/></svg>
<svg class="a" style="left:707px;top:157px" width="18" height="15"><use href="#folder"/></svg>
<svg class="a" style="left:727px;top:163px" width="6" height="3"><use href="#dd"/></svg>
<svg class="a" style="left:746px;top:156px" width="17" height="17"><use href="#refresh"/></svg>
<svg class="a" style="left:774px;top:155px" width="14" height="18"><use href="#clip"/></svg>
<svg class="a" style="left:792px;top:163px" width="6" height="3"><use href="#dd"/></svg>
<svg class="a" style="left:806px;top:155px" width="17" height="18"><use href="#wrench"/></svg>
<div class="a " style="left:832px;top:157px;width:1px;height:15px;background:#a0a0a0;"></div>
<svg class="a" style="left:849px;top:158px" width="13" height="13"><use href="#plus"/></svg>
<svg class="a" style="left:876px;top:156px" width="20" height="16"><use href="#money"/></svg>
<svg class="a" style="left:909px;top:155px" width="17" height="18"><use href="#down"/></svg>
<svg class="a" style="left:936px;top:155px" width="17" height="18"><use href="#cart"/></svg>
<svg class="a" style="left:956px;top:163px" width="6" height="3"><use href="#dd"/></svg>
<svg class="a" style="left:970px;top:157px" width="18" height="14"><use href="#check"/></svg>
<svg class="a" style="left:1000px;top:155px" width="14" height="18"><use href="#odoc"/></svg>
<svg class="a" style="left:1017px;top:163px" width="6" height="3"><use href="#dd"/></svg>
<svg class="a" style="left:1032px;top:154px" width="19" height="19"><use href="#dollar"/></svg>
<svg class="a" style="left:1059px;top:155px" width="20" height="18"><use href="#printer"/></svg>
<svg class="a" style="left:1080px;top:163px" width="6" height="3"><use href="#dd"/></svg>
<svg class="a" style="left:1093px;top:156px" width="20" height="16"><use href="#xbox"/></svg>
<svg class="a" style="left:1125px;top:154px" width="19" height="19"><use href="#dollar"/></svg>
<svg class="a" style="left:1155px;top:154px" width="21" height="20.5"><use href="#gears"/></svg>
<svg class="a" style="left:1189px;top:155px" width="14" height="18"><use href="#docgear"/></svg>
<div class="a " style="left:1202px;top:150px;width:4px;height:30px;background:#f0f0f0;"></div>
<div class="a " style="left:488px;top:179px;width:714px;height:158px;background:#fff;border:1px solid #b8b8b8;box-sizing:border-box;"></div>
<div class="a " style="left:489px;top:180px;width:694px;height:36px;background:#f0f0f0;"></div>
<div class="a " style="left:489px;top:216px;width:694px;height:1px;background:#c0c0c0;"></div>
<div class="a " style="left:489px;top:239px;width:694px;height:1px;background:#c0c0c0;"></div>
<div class="a " style="left:489px;top:240px;width:694px;height:22px;background:#ffe2cb;"></div>
<div class="a " style="left:489px;top:262px;width:694px;height:1px;background:#c0c0c0;"></div>
<div class="a " style="left:569px;top:180px;width:1px;height:123px;background:#c0c0c0;"></div>
<div class="a " style="left:697px;top:180px;width:1px;height:123px;background:#c0c0c0;"></div>
<div class="a " style="left:766px;top:180px;width:1px;height:123px;background:#c0c0c0;"></div>
<div class="a " style="left:854px;top:180px;width:1px;height:123px;background:#c0c0c0;"></div>
<div class="a " style="left:952px;top:180px;width:1px;height:123px;background:#c0c0c0;"></div>
<div class="a " style="left:1031px;top:180px;width:1px;height:123px;background:#c0c0c0;"></div>
<div class="a " style="left:1101px;top:180px;width:1px;height:123px;background:#c0c0c0;"></div>
<div class="a" style="left:489px;top:266px;width:695px;height:40px;background:linear-gradient(rgba(255,255,255,0),#fff)"></div>
<div class="a t" style="top:186px;height:13px;line-height:13px;font-size:11px;color:#000;letter-spacing:-0.172px;right:641.17px;text-align:right;">Номер</div>
<div class="a t" style="top:198px;height:13px;line-height:13px;font-size:11px;color:#000;letter-spacing:-0.007px;right:641.01px;text-align:right;">замовлення</div>
<div class="a t" style="top:192px;height:14px;line-height:14px;font-size:11px;color:#000;font-weight:bold;-webkit-text-stroke:0.3px;letter-spacing:-0.055px;left:572px;">Виріб</div>
<div class="a t" style="top:186px;height:13px;line-height:13px;font-size:11px;color:#000;letter-spacing:-0.089px;left:700px;">Дата</div>
<div class="a t" style="top:198px;height:13px;line-height:13px;font-size:11px;color:#000;letter-spacing:0.155px;left:700px;">початку</div>
<div class="a t" style="top:186px;height:13px;line-height:13px;font-size:11px;color:#000;letter-spacing:-0.089px;left:770px;">Дата</div>
<div class="a t" style="top:198px;height:13px;line-height:13px;font-size:11px;color:#000;letter-spacing:0.155px;left:770px;">закінчення</div>
<div class="a t" style="top:192px;height:14px;line-height:14px;font-size:11px;color:#000;letter-spacing:0.193px;left:858px;">Дата готовності</div>
<div class="a t" style="top:192px;height:14px;line-height:14px;font-size:11px;color:#000;letter-spacing:0.012px;left:956px;">Дата видачі</div>
<div class="a t" style="top:192px;height:14px;line-height:14px;font-size:11px;color:#000;letter-spacing:-0.391px;right:109.39px;text-align:right;">ВСЬОГО</div>
<div class="a t" style="top:192px;height:14px;line-height:14px;font-size:11px;color:#000;letter-spacing:-0.072px;right:25.07px;text-align:right;">Передплата</div>
<div class="a " style="left:489px;top:217px;width:80px;height:22px;background:#3399ff;"></div>
<svg class="a" style="left:494px;top:219px" width="15" height="18" viewBox="0 0 15 18"><path d="M1.5 0.5H9L13.5 5V17.5H1.5Z M9 0.5V5H13.5 M7.5 8V14M4.5 11H10.5" fill="none" stroke="#1b3a5c" stroke-width="1.1"/></svg>
<div class="a t" style="top:221px;height:14px;line-height:14px;font-size:11px;color:#fff;right:643.00px;text-align:right;">8</div>
<svg class="a" style="left:573px;top:219px" width="18" height="18"><use href="#ogrid"/></svg>
<div class="a t" style="top:221px;height:14px;line-height:14px;font-size:11px;color:#f00;letter-spacing:0.115px;left:599px;">Кроссовки Крос...</div>
<div class="a t" style="top:221px;height:14px;line-height:14px;font-size:11px;color:#f00;letter-spacing:-0.005px;left:702px;">01.09.2020</div>
<div class="a t" style="top:221px;height:14px;line-height:14px;font-size:11px;color:#f00;letter-spacing:-0.005px;left:771px;">06.09.2020</div>
<div class="a t" style="top:221px;height:14px;line-height:14px;font-size:11px;color:#f00;letter-spacing:-0.102px;right:111.10px;text-align:right;">0,00</div>
<div class="a t" style="top:221px;height:14px;line-height:14px;font-size:11px;color:#f00;letter-spacing:-0.102px;right:27.10px;text-align:right;">0,00</div>
<svg class="a" style="left:497px;top:245px" width="11" height="13"><use href="#playblue"/></svg>
<div class="a t" style="top:244px;height:14px;line-height:14px;font-size:11px;color:#f00;font-weight:bold;-webkit-text-stroke:0.3px;right:644.00px;text-align:right;">9</div>
<svg class="a" style="left:573px;top:242px" width="18" height="18"><use href="#ogrid"/></svg>
<div class="a t" style="top:244px;height:14px;line-height:14px;font-size:11px;color:#f00;font-weight:bold;-webkit-text-stroke:0.3px;letter-spacing:0.719px;left:599px;">Кроссовки К...</div>
<div class="a t" style="top:244px;height:14px;line-height:14px;font-size:11px;color:#f00;font-weight:bold;-webkit-text-stroke:0.3px;letter-spacing:0.813px;left:702px;">01.09.2...</div>
<div class="a t" style="top:244px;height:14px;line-height:14px;font-size:11px;color:#f00;font-weight:bold;-webkit-text-stroke:0.3px;letter-spacing:0.895px;left:771px;">06.09.2020</div>
<div class="a t" style="top:244px;height:14px;line-height:14px;font-size:11px;color:#f00;font-weight:bold;-webkit-text-stroke:0.3px;letter-spacing:0.898px;right:110.10px;text-align:right;">5,40</div>
<div class="a t" style="top:244px;height:14px;line-height:14px;font-size:11px;color:#f00;font-weight:bold;-webkit-text-stroke:0.3px;letter-spacing:0.898px;right:26.10px;text-align:right;">0,00</div>
<div class="a " style="left:1183px;top:180px;width:18px;height:138px;background:#fff;"></div>
<svg class="a" style="left:1186px;top:187px" width="9" height="6"><use href="#su"/></svg>
<div class="a " style="left:1184px;top:198px;width:15px;height:52px;background:#bcbcbc;border-radius:2px;"></div>
<svg class="a" style="left:1186px;top:307px" width="9" height="6"><use href="#sd"/></svg>
<svg class="a" style="left:494px;top:322px" width="6" height="9"><use href="#sl"/></svg>
<div class="a " style="left:506px;top:319px;width:317px;height:14px;background:#bcbcbc;border-radius:2px;"></div>
<svg class="a" style="left:1171px;top:322px" width="6" height="9"><use href="#sr"/></svg>
<div class="a " style="left:1183px;top:318px;width:17px;height:17px;background:#bcbcbc;"></div>
<div class="a " style="left:489px;top:340px;width:54px;height:23px;background:#e2e3e4;"></div>
<div class="a " style="left:546px;top:340px;width:77px;height:23px;background:#e2e3e4;"></div>
<div class="a " style="left:626px;top:340px;width:110px;height:23px;background:#e2e3e4;"></div>
<div class="a " style="left:739px;top:340px;width:101px;height:23px;background:#e2e3e4;"></div>
<div class="a " style="left:843px;top:340px;width:94px;height:23px;background:#e2e3e4;"></div>
<div class="a " style="left:940px;top:340px;width:122px;height:23px;background:#e2e3e4;"></div>
<div class="a " style="left:1065px;top:340px;width:81px;height:23px;background:#e2e3e4;"></div>
<div class="a t" style="top:345px;height:14px;line-height:14px;font-size:11px;color:#000;font-weight:bold;-webkit-text-stroke:0.3px;letter-spacing:0.471px;left:497px;">К-сть</div>
<div class="a t" style="top:345px;height:14px;line-height:14px;font-size:11px;color:#000;left:532px;">2</div>
<div class="a t" style="top:345px;height:14px;line-height:14px;font-size:11px;color:#000;font-weight:bold;-webkit-text-stroke:0.3px;letter-spacing:0.050px;left:553px;">Всього</div>
<div class="a t" style="top:345px;height:14px;line-height:14px;font-size:11px;color:#000;letter-spacing:0.148px;left:596px;">5,40</div>
<div class="a t" style="top:345px;height:14px;line-height:14px;font-size:11px;color:#000;font-weight:bold;-webkit-text-stroke:0.3px;letter-spacing:0.790px;left:632px;">Передплата</div>
<div class="a t" style="top:345px;height:14px;line-height:14px;font-size:11px;color:#000;letter-spacing:0.148px;left:709px;">0,00</div>
<div class="a t" style="top:345px;height:14px;line-height:14px;font-size:11px;color:#000;font-weight:bold;-webkit-text-stroke:0.3px;letter-spacing:0.474px;left:746px;">Доплатити</div>
<div class="a t" style="top:345px;height:14px;line-height:14px;font-size:11px;color:#000;letter-spacing:0.148px;left:813px;">5,40</div>
<div class="a t" style="top:345px;height:14px;line-height:14px;font-size:11px;color:#000;font-weight:bold;-webkit-text-stroke:0.3px;letter-spacing:0.263px;left:849px;">Оплачено</div>
<div class="a t" style="top:345px;height:14px;line-height:14px;font-size:11px;color:#000;letter-spacing:0.148px;left:909px;">0,00</div>
<div class="a t" style="top:345px;height:14px;line-height:14px;font-size:11px;color:#000;font-weight:bold;-webkit-text-stroke:0.3px;letter-spacing:0.345px;left:946px;">Ст. отрим. тов.</div>
<div class="a t" style="top:345px;height:14px;line-height:14px;font-size:11px;color:#000;letter-spacing:0.148px;left:1034px;">0,00</div>
<div class="a t" style="top:345px;height:14px;line-height:14px;font-size:11px;color:#000;font-weight:bold;-webkit-text-stroke:0.3px;letter-spacing:0.343px;left:1072px;">Ст. тов.</div>
<div class="a t" style="top:345px;height:14px;line-height:14px;font-size:11px;color:#000;letter-spacing:0.148px;left:1119px;">5,40</div>
<div class="a " style="left:489px;top:368px;width:89px;height:23px;background:#e2e3e4;"></div>
<div class="a " style="left:581px;top:368px;width:95px;height:23px;background:#e2e3e4;"></div>
<div class="a " style="left:679px;top:368px;width:73px;height:23px;background:#e2e3e4;"></div>
<div class="a t" style="top:373px;height:14px;line-height:14px;font-size:11px;color:#000;font-weight:bold;-webkit-text-stroke:0.3px;letter-spacing:0.427px;left:496px;">Ст. робіт</div>
<div class="a t" style="top:373px;height:14px;line-height:14px;font-size:11px;color:#000;letter-spacing:0.148px;left:550px;">0,00</div>
<svg class="a" style="left:592px;top:370px" width="15" height="18"><use href="#newdoc"/></svg>
<div class="a t" style="top:373px;height:14px;line-height:14px;font-size:11px;color:#808080;letter-spacing:0.254px;left:613px;">Підготовка</div>
<svg class="a" style="left:689px;top:371px" width="18" height="18"><use href="#ogrid"/></svg>
<div class="a t" style="top:373px;height:14px;line-height:14px;font-size:11px;color:#808080;letter-spacing:0.150px;left:712px;">У групі</div>
<div class="a " style="left:5px;top:437px;width:1197px;height:3px;background:#b4b4b4;"></div>
<div class="a " style="left:488px;top:395px;width:714px;height:45px;background:#fff;"></div>
<div class="a " style="left:488px;top:395px;width:714px;height:2px;background:#b4b4b4;"></div>
<div class="a " style="left:488px;top:437px;width:714px;height:3px;background:#b4b4b4;"></div>
<div class="a " style="left:1200px;top:395px;width:2px;height:45px;background:#c8c8c8;"></div>
<div class="a " style="left:10px;top:475px;width:1191px;height:1px;background:#a8a8a8;"></div>
<div class="a " style="left:10px;top:450px;width:100px;height:26px;background:#d6d6d6;border:1px solid #a8a8a8;box-sizing:border-box;"></div>
<div class="a " style="left:110px;top:450px;width:87px;height:26px;background:#d6d6d6;border:1px solid #a8a8a8;box-sizing:border-box;"></div>
<div class="a " style="left:197px;top:450px;width:82px;height:26px;background:#d6d6d6;border:1px solid #a8a8a8;box-sizing:border-box;"></div>
<div class="a " style="left:279px;top:450px;width:101px;height:26px;background:#d6d6d6;border:1px solid #a8a8a8;box-sizing:border-box;"></div>
<div class="a " style="left:380px;top:450px;width:83px;height:26px;background:#d6d6d6;border:1px solid #a8a8a8;box-sizing:border-box;"></div>
<div class="a " style="left:462px;top:450px;width:74px;height:26px;background:#f0f0f0;border:1px solid #a8a8a8;box-sizing:border-box;border-bottom:none;"></div>
<svg class="a" style="left:18px;top:458px" width="18" height="10"><use href="#olist"/></svg>
<div class="a t" style="top:456px;height:14px;line-height:14px;font-size:11px;color:#555;letter-spacing:0.285px;left:43px;">Матеріали</div>
<svg class="a" style="left:118px;top:454px" width="18" height="18"><use href="#uicon"/></svg>
<div class="a t" style="top:456px;height:14px;line-height:14px;font-size:11px;color:#555;letter-spacing:0.486px;left:143px;">Послуги</div>
<svg class="a" style="left:205px;top:454px" width="18" height="18"><use href="#picon"/></svg>
<div class="a t" style="top:456px;height:14px;line-height:14px;font-size:11px;color:#555;letter-spacing:0.445px;left:229px;">Роботи</div>
<svg class="a" style="left:287px;top:454px" width="18" height="18"><use href="#move"/></svg>
<div class="a t" style="top:456px;height:14px;line-height:14px;font-size:11px;color:#555;letter-spacing:0.324px;left:311px;">Рух товару</div>
<svg class="a" style="left:387px;top:455px" width="20" height="16"><use href="#money"/></svg>
<div class="a t" style="top:456px;height:14px;line-height:14px;font-size:11px;color:#555;letter-spacing:0.335px;left:412px;">Оплати</div>
<svg class="a" style="left:469px;top:453px" width="19" height="19"><use href="#layers"/></svg>
<div class="a t" style="top:456px;height:14px;line-height:14px;font-size:11px;color:#000;letter-spacing:-0.167px;left:494px;">Склад</div>
<div class="a " style="left:10px;top:494px;width:106px;height:26px;background:#fff;border:1px solid #c6c6c6;box-sizing:border-box;"></div>
<svg class="a" style="left:75px;top:503px" width="10" height="10"><use href="#x"/></svg>
<svg class="a" style="left:95px;top:502px" width="12" height="12"><use href="#search"/></svg>
<svg class="a" style="left:108px;top:507px" width="6" height="3"><use href="#dd"/></svg>
<div class="a " style="left:126px;top:500px;width:1px;height:15px;background:#a0a0a0;"></div>
<svg class="a" style="left:144px;top:499px" width="17" height="17"><use href="#refresh"/></svg>
<svg class="a" style="left:174px;top:499px" width="17" height="17"><use href="#wrench"/></svg>
<div class="a " style="left:200px;top:500px;width:1px;height:15px;background:#a0a0a0;"></div>
<svg class="a" style="left:215px;top:498px" width="15" height="17"><use href="#scis"/></svg>
<svg class="a" style="left:244px;top:498px" width="20" height="18"><use href="#printer"/></svg>
<svg class="a" style="left:274.5px;top:499px" width="21" height="16"><use href="#printer2"/></svg>
<div class="a " style="left:302px;top:496px;width:168px;height:22px;background:#fff;border:1px solid #c6c6c6;box-sizing:border-box;"></div>
<div class="a t" style="top:500px;height:14px;line-height:14px;font-size:11px;color:#000;letter-spacing:0.118px;left:306px;">[Назва товару]</div>
<svg class="a" style="left:455px;top:505px" width="9" height="5"><use href="#chev"/></svg>
<div class="a t" style="top:500px;height:14px;line-height:14px;font-size:11px;color:#000;font-weight:bold;-webkit-text-stroke:0.3px;letter-spacing:0.410px;left:509px;">Артикул</div>
<div class="a " style="left:562px;top:497px;width:121px;height:21px;background:#fff;border:1px solid #c6c6c6;box-sizing:border-box;"></div>
<div class="a t" style="top:500px;height:14px;line-height:14px;font-size:11px;color:#000;letter-spacing:0.007px;left:565px;">44555987</div>
<div class="a " style="left:10px;top:522px;width:1188px;height:149px;background:#fff;border:1px solid #b8b8b8;box-sizing:border-box;"></div>
<div class="a " style="left:11px;top:523px;width:1168px;height:36px;background:#f0f0f0;"></div>
<div class="a " style="left:11px;top:559px;width:1168px;height:1px;background:#c0c0c0;"></div>
<div class="a " style="left:11px;top:582px;width:1168px;height:1px;background:#c0c0c0;"></div>
<div class="a " style="left:11px;top:605px;width:1168px;height:1px;background:#c0c0c0;"></div>
<div class="a " style="left:11px;top:628px;width:1168px;height:1px;background:#c0c0c0;"></div>
<div class="a " style="left:11px;top:651px;width:1168px;height:1px;background:#c0c0c0;"></div>
<div class="a " style="left:319px;top:523px;width:1px;height:129px;background:#c0c0c0;"></div>
<div class="a " style="left:362px;top:523px;width:1px;height:129px;background:#c0c0c0;"></div>
<div class="a " style="left:423px;top:523px;width:1px;height:129px;background:#c0c0c0;"></div>
<div class="a " style="left:480px;top:523px;width:1px;height:129px;background:#c0c0c0;"></div>
<div class="a " style="left:544px;top:523px;width:1px;height:129px;background:#c0c0c0;"></div>
<div class="a " style="left:631px;top:523px;width:1px;height:129px;background:#c0c0c0;"></div>
<div class="a " style="left:668px;top:523px;width:1px;height:129px;background:#c0c0c0;"></div>
<div class="a " style="left:749px;top:523px;width:1px;height:129px;background:#c0c0c0;"></div>
<div class="a " style="left:797px;top:523px;width:1px;height:129px;background:#c0c0c0;"></div>
<div class="a " style="left:849px;top:523px;width:1px;height:129px;background:#c0c0c0;"></div>
<div class="a " style="left:992px;top:523px;width:1px;height:129px;background:#c0c0c0;"></div>
<div class="a t" style="top:534px;height:14px;line-height:14px;font-size:11px;color:#000;font-weight:bold;-webkit-text-stroke:0.3px;letter-spacing:0.680px;left:14px;">Назва товару</div>
<div class="a t" style="top:534px;height:14px;line-height:14px;font-size:11px;color:#000;letter-spacing:-0.167px;left:322px;">Склад</div>
<div class="a t" style="top:534px;height:14px;line-height:14px;font-size:11px;color:#000;letter-spacing:-0.162px;left:365px;">Матеріал</div>
<div class="a t" style="top:534px;height:14px;line-height:14px;font-size:11px;color:#000;letter-spacing:-0.197px;left:426px;">Штрих-код</div>
<div class="a t" style="top:534px;height:14px;line-height:14px;font-size:11px;color:#000;letter-spacing:0.164px;right:665.84px;text-align:right;">Кількість</div>
<div class="a t" style="top:534px;height:14px;line-height:14px;font-size:11px;color:#000;letter-spacing:-0.087px;right:579.09px;text-align:right;">Ціна роздрібна</div>
<div class="a t" style="top:534px;height:14px;line-height:14px;font-size:11px;color:#000;letter-spacing:-0.053px;left:634px;">Колір</div>
<div class="a t" style="top:534px;height:14px;line-height:14px;font-size:11px;color:#000;letter-spacing:-0.174px;right:461.17px;text-align:right;">Ціна опту</div>
<div class="a t" style="top:534px;height:14px;line-height:14px;font-size:11px;color:#000;letter-spacing:0.268px;right:412.73px;text-align:right;">Знижка</div>
<div class="a t" style="top:534px;height:14px;line-height:14px;font-size:11px;color:#000;left:800px;">Артикул</div>
<div class="a t" style="top:534px;height:14px;line-height:14px;font-size:11px;color:#000;letter-spacing:0.092px;left:853px;">Коротка назва товару</div>
<div class="a t" style="left:993px;top:534px;width:186px;height:14px;line-height:14px;overflow:hidden;text-align:left;"><span style="margin-left:27px;letter-spacing:-0.11px">Виручка планована роздрібна з</span></div>
<svg class="a" style="left:15px;top:566px" width="18" height="10"><use href="#olist"/></svg>
<svg class="a" style="left:40px;top:562px" width="20" height="20"><use href="#rollcut"/></svg>
<div class="a t" style="top:564px;height:14px;line-height:14px;font-size:11px;color:#000;letter-spacing:0.294px;left:65px;">ВІДР.Тканина</div>
<div class="a t" style="top:564px;height:14px;line-height:14px;font-size:11px;color:#000;letter-spacing:0.158px;left:140.2px;">красная</div>
<div class="a t" style="top:564px;height:14px;line-height:14px;font-size:11px;color:#000;letter-spacing:-0.268px;left:185.3px;">44555987</div>
<div class="a t" style="top:564px;height:14px;line-height:14px;font-size:11px;color:#000;letter-spacing:0.303px;left:235.8px;">Украина</div>
<div class="a t" style="top:564px;height:14px;line-height:14px;font-size:11px;color:#000;letter-spacing:-1.659px;left:283.4px;">№1</div>
<div class="a t" style="top:564px;height:14px;line-height:14px;font-size:11px;color:#000;letter-spacing:-0.167px;left:324px;">Склад</div>
<div class="a t" style="top:564px;height:14px;line-height:14px;font-size:11px;color:#000;letter-spacing:-0.208px;left:428px;">294955...</div>
<div class="a t" style="top:564px;height:14px;line-height:14px;font-size:11px;color:#000;right:669.00px;text-align:right;">1</div>
<div class="a t" style="top:564px;height:14px;line-height:14px;font-size:11px;color:#000;letter-spacing:-0.227px;right:581.23px;text-align:right;">4 500,00</div>
<div class="a t" style="top:564px;height:14px;line-height:14px;font-size:11px;color:#000;letter-spacing:-0.036px;left:636px;">кра...</div>
<div class="a t" style="top:564px;height:14px;line-height:14px;font-size:11px;color:#000;letter-spacing:-0.227px;right:463.23px;text-align:right;">3 600,00</div>
<div class="a t" style="top:564px;height:14px;line-height:14px;font-size:11px;color:#000;letter-spacing:-0.220px;left:802px;">44555...</div>
<div class="a t" style="left:1140px;top:564px;width:39px;height:14px;line-height:14px;overflow:hidden;"><span style="margin-left:20px">3 000,00</span></div>
<svg class="a" style="left:15px;top:584px" width="18" height="19"><use href="#layersgray"/></svg>
<svg class="a" style="left:40px;top:585px" width="20" height="20"><use href="#rollcut"/></svg>
<div class="a t" style="top:587px;height:14px;line-height:14px;font-size:11px;color:#000;letter-spacing:0.294px;left:65px;">ВІДР.Тканина</div>
<div class="a t" style="top:587px;height:14px;line-height:14px;font-size:11px;color:#000;letter-spacing:0.158px;left:140.2px;">красная</div>
<div class="a t" style="top:587px;height:14px;line-height:14px;font-size:11px;color:#000;letter-spacing:-0.268px;left:185.3px;">44555987</div>
<div class="a t" style="top:587px;height:14px;line-height:14px;font-size:11px;color:#000;letter-spacing:0.303px;left:235.8px;">Украина</div>
<div class="a t" style="top:587px;height:14px;line-height:14px;font-size:11px;color:#000;letter-spacing:-1.659px;left:283.4px;">№1</div>
<div class="a t" style="top:587px;height:14px;line-height:14px;font-size:11px;color:#000;letter-spacing:0.126px;left:324px;">Маг...</div>
<div class="a t" style="top:587px;height:14px;line-height:14px;font-size:11px;color:#000;letter-spacing:-0.208px;left:428px;">294955...</div>
<div class="a t" style="top:587px;height:14px;line-height:14px;font-size:11px;color:#000;letter-spacing:-0.314px;right:667.81px;text-align:right;">-0,75</div>
<div class="a t" style="top:587px;height:14px;line-height:14px;font-size:11px;color:#000;letter-spacing:-0.227px;right:581.23px;text-align:right;">4 500,00</div>
<div class="a t" style="top:587px;height:14px;line-height:14px;font-size:11px;color:#000;letter-spacing:-0.036px;left:636px;">кра...</div>
<div class="a t" style="top:587px;height:14px;line-height:14px;font-size:11px;color:#000;letter-spacing:-0.227px;right:463.23px;text-align:right;">3 600,00</div>
<div class="a t" style="top:587px;height:14px;line-height:14px;font-size:11px;color:#000;letter-spacing:-0.220px;left:802px;">44555...</div>
<div class="a t" style="left:1140px;top:587px;width:39px;height:14px;line-height:14px;overflow:hidden;"><span style="margin-left:20px">3 000,00</span></div>
<svg class="a" style="left:15px;top:612px" width="18" height="10"><use href="#olist"/></svg>
<svg class="a" style="left:40px;top:608px" width="17" height="18"><use href="#roll"/></svg>
<div class="a t" style="top:610px;height:14px;line-height:14px;font-size:11px;color:#000;letter-spacing:0.290px;left:65px;">РУЛ.Тканина</div>
<div class="a t" style="top:610px;height:14px;line-height:14px;font-size:11px;color:#000;letter-spacing:0.158px;left:137.3px;">красная</div>
<div class="a t" style="top:610px;height:14px;line-height:14px;font-size:11px;color:#000;letter-spacing:-0.268px;left:182.4px;">44555987</div>
<div class="a t" style="top:610px;height:14px;line-height:14px;font-size:11px;color:#000;letter-spacing:0.303px;left:232.9px;">Украина</div>
<div class="a t" style="top:610px;height:14px;line-height:14px;font-size:11px;color:#000;letter-spacing:-1.659px;left:280.5px;">№1</div>
<div class="a t" style="top:610px;height:14px;line-height:14px;font-size:11px;color:#000;letter-spacing:-0.167px;left:324px;">Склад</div>
<div class="a t" style="top:610px;height:14px;line-height:14px;font-size:11px;color:#000;letter-spacing:-0.208px;left:428px;">294955...</div>
<div class="a t" style="top:610px;height:14px;line-height:14px;font-size:11px;color:#000;right:669.00px;text-align:right;">1</div>
<div class="a t" style="top:610px;height:14px;line-height:14px;font-size:11px;color:#000;letter-spacing:-0.227px;right:581.23px;text-align:right;">4 500,00</div>
<div class="a t" style="top:610px;height:14px;line-height:14px;font-size:11px;color:#000;letter-spacing:-0.036px;left:636px;">кра...</div>
<div class="a t" style="top:610px;height:14px;line-height:14px;font-size:11px;color:#000;letter-spacing:-0.227px;right:463.23px;text-align:right;">3 600,00</div>
<div class="a t" style="top:610px;height:14px;line-height:14px;font-size:11px;color:#000;letter-spacing:-0.220px;left:802px;">44555...</div>
<div class="a " style="left:11px;top:629px;width:308px;height:22px;background:#3399ff;"></div>
<svg class="a" style="left:15px;top:635px" width="18" height="10"><use href="#olist"/></svg>
<svg class="a" style="left:40px;top:631px" width="17" height="18"><use href="#roll"/></svg>
<div class="a t" style="top:633px;height:14px;line-height:14px;font-size:11px;color:#fff;letter-spacing:0.290px;left:65px;">РУЛ.Тканина</div>
<div class="a t" style="top:633px;height:14px;line-height:14px;font-size:11px;color:#fff;letter-spacing:0.158px;left:137.3px;">красная</div>
<div class="a t" style="top:633px;height:14px;line-height:14px;font-size:11px;color:#fff;letter-spacing:-0.268px;left:182.4px;">44555987</div>
<div class="a t" style="top:633px;height:14px;line-height:14px;font-size:11px;color:#fff;letter-spacing:0.303px;left:232.9px;">Украина</div>
<div class="a t" style="top:633px;height:14px;line-height:14px;font-size:11px;color:#fff;letter-spacing:-1.659px;left:280.5px;">№1</div>
<div class="a t" style="top:633px;height:14px;line-height:14px;font-size:11px;color:#000;letter-spacing:0.126px;left:324px;">Маг...</div>
<div class="a t" style="top:633px;height:14px;line-height:14px;font-size:11px;color:#000;letter-spacing:-0.208px;left:428px;">294955...</div>
<div class="a t" style="top:633px;height:14px;line-height:14px;font-size:11px;color:#000;letter-spacing:-0.402px;right:667.90px;text-align:right;">3,75</div>
<div class="a t" style="top:633px;height:14px;line-height:14px;font-size:11px;color:#000;letter-spacing:-0.227px;right:581.23px;text-align:right;">4 500,00</div>
<div class="a t" style="top:633px;height:14px;line-height:14px;font-size:11px;color:#000;letter-spacing:-0.036px;left:636px;">кра...</div>
<div class="a t" style="top:633px;height:14px;line-height:14px;font-size:11px;color:#000;letter-spacing:-0.227px;right:463.23px;text-align:right;">3 600,00</div>
<div class="a t" style="top:633px;height:14px;line-height:14px;font-size:11px;color:#000;letter-spacing:-0.220px;left:802px;">44555...</div>
<div class="a t" style="left:1140px;top:633px;width:39px;height:14px;line-height:14px;overflow:hidden;"><span style="margin-left:20px">3 000,00</span></div>
<svg class="a" style="left:484px;top:584px" width="19" height="19"><use href="#layerschk"/></svg>
<div class="a " style="left:1179px;top:523px;width:18px;height:129px;background:#fff;"></div>
<svg class="a" style="left:1183px;top:529px" width="9" height="6"><use href="#su"/></svg>
<div class="a " style="left:1180px;top:588px;width:15px;height:46px;background:#bcbcbc;border-radius:2px;"></div>
<svg class="a" style="left:1183px;top:640px" width="9" height="6"><use href="#sd"/></svg>
<div class="a " style="left:11px;top:652px;width:1186px;height:18px;background:#fff;"></div>
<svg class="a" style="left:17px;top:656px" width="6" height="9"><use href="#sl"/></svg>
<div class="a " style="left:29px;top:654px;width:428px;height:13px;background:#bcbcbc;border-radius:2px;"></div>
<svg class="a" style="left:1167px;top:656px" width="6" height="9"><use href="#sr"/></svg>
<div class="a " style="left:1179px;top:652px;width:17px;height:17px;background:#bcbcbc;"></div>
<div class="a " style="left:12px;top:674px;width:69px;height:23px;background:#e2e3e4;"></div>
<svg class="a" style="left:22px;top:681px" width="18" height="10"><use href="#olist"/></svg>
<div class="a t" style="top:679px;height:14px;line-height:14px;font-size:11px;color:#555;letter-spacing:0.013px;left:44px;">Товар</div>
<div class="a " style="left:84px;top:674px;width:68px;height:23px;background:#e2e3e4;"></div>
<svg class="a" style="left:94px;top:676px" width="17" height="18"><use href="#roll"/></svg>
<div class="a t" style="top:679px;height:14px;line-height:14px;font-size:11px;color:#555;letter-spacing:-0.066px;left:115px;">Рулон</div>
<div class="a" style="left:2px;top:131px;width:486px;height:312px;box-sizing:border-box;border:3px solid #fc0000;border-radius:2px"></div>
<div class="a" style="left:128px;top:151px;width:35px;height:30px;box-sizing:border-box;border:3px solid #fc0000;border-radius:3px"></div>
<svg class="a" style="left:0;top:0" width="1208" height="711"><g stroke="#fc0000" fill="#fc0000" stroke-linecap="round"><path d="M548.3 33.8L478 116" stroke-width="2.7" fill="none"/><path d="M471.8 123L475.4 108.8L484.6 116.6Z" stroke="none"/><path d="M186.4 286.4L154 201" stroke-width="2.7" fill="none"/><path d="M150 190.6L150.6 204.6L160.8 200.6Z" stroke="none"/><path d="M558 19.6L563.4 14V31.6M557.6 31.6H569.2" stroke-width="2.3" fill="none" stroke-linecap="butt" stroke-linejoin="miter"/></g></svg>
<div class="a t" style="top:292px;height:32px;line-height:32px;font-size:29px;color:#fc0000;left:182.6px;transform:scaleX(0.95);transform-origin:left;">2</div>
</body></html>
